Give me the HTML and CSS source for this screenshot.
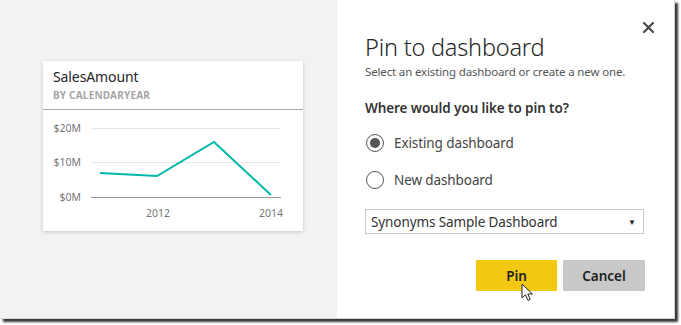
FILE: index.html
```html
<!DOCTYPE html>
<html>
<head>
<meta charset="utf-8">
<link rel="stylesheet" href="styles.css">
</head>
<body>
<div class="frame">
  <div class="left">
    <div class="card">
      <div class="card-head">
        <div class="card-title">SalesAmount</div>
        <div class="card-sub">BY CALENDARYEAR</div>
      </div>
      <svg class="chart" width="260" height="120" viewBox="0 0 260 120">
        <line x1="48" y1="18.5" x2="238" y2="18.5" stroke="#e6e6e6" stroke-width="1"/>
        <line x1="48" y1="52.5" x2="238" y2="52.5" stroke="#e6e6e6" stroke-width="1"/>
        <line x1="48" y1="87.5" x2="238" y2="87.5" stroke="#9a9a9a" stroke-width="1"/>
        <text class="ax" x="38" y="22" text-anchor="end">$20M</text>
        <text class="ax" x="38" y="56" text-anchor="end">$10M</text>
        <text class="ax" x="38" y="91" text-anchor="end">$0M</text>
        <text class="ax" x="115" y="107" text-anchor="middle">2012</text>
        <text class="ax" x="228" y="107" text-anchor="middle">2014</text>
        <polyline points="57,63 114,66 171,32 228,85" fill="none" stroke="#01B8AA" stroke-width="2" stroke-linejoin="miter"/>
      </svg>
    </div>
  </div>
  <div class="right">
    <div class="head-row">
      <div class="titles">
        <h1 class="title">Pin to dashboard</h1>
        <p class="desc">Select an existing dashboard or create a new one.</p>
      </div>
      <button class="close" aria-label="Close">
        <svg width="11" height="11" viewBox="0 0 11 11"><path d="M1 1 L10 10 M10 1 L1 10" stroke="#4a4a4a" stroke-width="2.2" stroke-linecap="square"/></svg>
      </button>
    </div>
    <div class="question">Where would you like to pin to?</div>
    <div class="radio-row">
      <span class="radio checked"><span class="dot"></span></span>
      <span class="radio-label">Existing dashboard</span>
    </div>
    <div class="radio-row second">
      <span class="radio"></span>
      <span class="radio-label">New dashboard</span>
    </div>
    <div class="select">
      <span class="select-text">Synonyms Sample Dashboard</span>
      <span class="arrow">&#9660;</span>
    </div>
    <div class="buttons">
      <button class="btn pin">Pin
        <svg class="cursor" width="14" height="20" viewBox="0 0 14 20"><path d="M1 1 L1 15 L4.5 11.8 L7 17.5 L9.2 16.5 L6.8 11 L11.5 11 Z" fill="#fff" stroke="#222" stroke-width="1" stroke-linejoin="round"/></svg>
      </button>
      <button class="btn cancel">Cancel</button>
    </div>
  </div>
</div>
</body>
</html>
```
FILE: styles.css
```css
html, body {
  margin: 0;
  padding: 0;
  background: #ffffff;
}
body {
  width: 681px;
  height: 325px;
  overflow: hidden;
  font-family: "Segoe UI", "Noto Sans", "Open Sans", sans-serif;
}
.frame {
  display: flex;
  width: 674px;
  height: 318px;
  border-right: 1px solid #d8d8d8;
  border-bottom: 1px solid #d8d8d8;
  box-shadow: 3px 3px 2px rgba(20, 20, 20, 0.85);
  overflow: hidden;
}
.left {
  width: 337px;
  background: #f2f2f2;
  padding: 61px 0 0 43px;
  box-sizing: border-box;
}
.card {
  width: 260px;
  height: 170px;
  background: #ffffff;
  box-shadow: 0 1px 4px rgba(0, 0, 0, 0.18);
  display: flex;
  flex-direction: column;
}
.card-head {
  border-bottom: 1px solid #a8a8a8;
  padding: 7px 0 0 10px;
  height: 41px;
}
.card-title {
  font-size: 14px;
  color: #252525;
  line-height: 18px;
  letter-spacing: -0.1px;
}
.card-sub {
  font-size: 10px;
  font-weight: bold;
  color: #a6a6a6;
  line-height: 14px;
  margin-top: 2px;
  letter-spacing: 0.2px;
}
.chart {
  display: block;
}
.ax {
  font-family: "Segoe UI", "Noto Sans", "Open Sans", sans-serif;
  font-size: 10.5px;
  fill: #777777;
}
.right {
  flex: 1;
  background: #ffffff;
  padding: 0 0 0 28px;
  display: flex;
  flex-direction: column;
}
.head-row {
  display: flex;
  justify-content: space-between;
  align-items: flex-start;
}
.titles {
  padding-top: 32px;
}
.title {
  margin: 0;
  font-weight: 300;
  font-size: 23.5px;
  line-height: 31px;
  color: #252525;
  letter-spacing: -0.2px;
}
.desc {
  margin: 1px 0 0 0;
  font-size: 11.5px;
  color: #555555;
  line-height: 16px;
  letter-spacing: -0.15px;
}
.close {
  margin: 22px 20px 0 0;
  padding: 0;
  width: 11px;
  height: 11px;
  border: none;
  background: none;
  display: flex;
}
.question {
  margin-top: 19px;
  font-size: 13.5px;
  font-weight: 600;
  color: #333333;
  line-height: 18px;
  letter-spacing: -0.1px;
}
.radio-row {
  display: flex;
  align-items: center;
  margin-top: 16px;
  height: 20px;
}
.radio-row.second {
  margin-top: 17px;
}
.radio {
  width: 16px;
  height: 16px;
  border: 1.5px solid #555555;
  border-radius: 50%;
  display: flex;
  align-items: center;
  justify-content: center;
  margin-left: 1px;
}
.dot {
  width: 10px;
  height: 10px;
  border-radius: 50%;
  background: #555555;
}
.radio-label {
  margin-left: 10px;
  font-size: 13.5px;
  color: #444444;
  letter-spacing: -0.1px;
}
.select {
  margin-top: 19px;
  width: 279px;
  height: 25px;
  box-sizing: border-box;
  border: 1px solid #c8c8c8;
  display: flex;
  align-items: center;
  justify-content: space-between;
  padding: 0 7px 0 5px;
}
.select-text {
  font-size: 13.5px;
  color: #333333;
  letter-spacing: -0.1px;
}
.arrow {
  font-size: 8px;
  color: #222222;
}
.buttons {
  display: flex;
  gap: 6px;
  margin: 26px 0 0 111px;
}
.btn {
  width: 81px;
  height: 31px;
  border: none;
  font-family: "Segoe UI", "Noto Sans", "Open Sans", sans-serif;
  font-size: 13.5px;
  font-weight: 600;
  color: #222222;
  padding: 0;
}
.pin {
  background: #f2c811;
  position: relative;
}
.cancel {
  background: #c8c8c8;
  width: 82px;
}
.cursor {
  position: absolute;
  left: 45px;
  top: 23px;
}
```
